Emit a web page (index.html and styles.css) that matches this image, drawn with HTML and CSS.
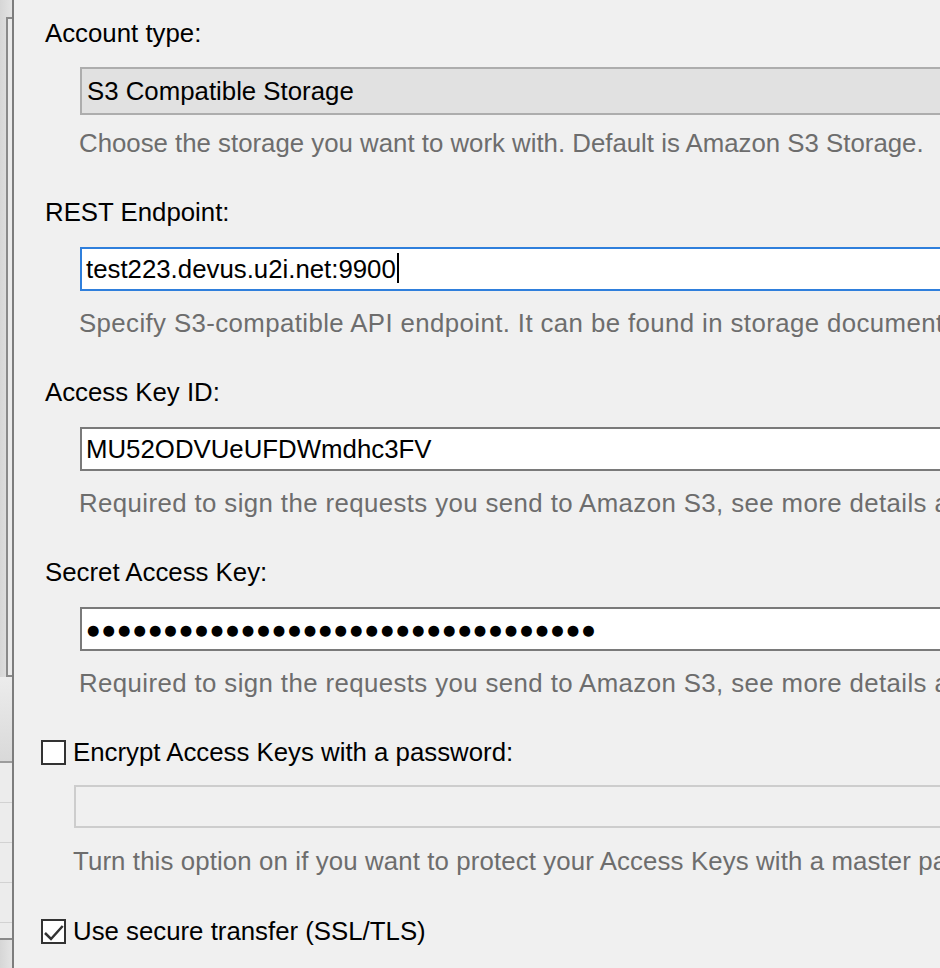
FILE: index.html
```html
<!DOCTYPE html>
<html lang="en">
<head>
<meta charset="utf-8">
<title>S3 Compatible Storage account</title>
<link rel="stylesheet" href="styles.css">
</head>
<body>
<div class="screen">
  <div class="backdrop">
    <div class="bd-panel"></div>
    <div class="bd-shade"></div>
    <div class="bd-row"></div>
    <div class="bd-row"></div>
    <div class="bd-row"></div>
    <div class="bd-row"></div>
    <div class="bd-last"></div>
  </div>
  <div class="edge"></div>
  <main class="dialog">
    <section class="group">
      <div class="label">Account type:</div>
      <div class="combo">S3 Compatible Storage</div>
      <div class="hint hint-first">Choose the storage you want to work with. Default is Amazon S3 Storage.</div>
    </section>
    <section class="group">
      <div class="label">REST Endpoint:</div>
      <div class="field focused">test223.devus.u2i.net:9900<span class="caret"></span></div>
      <div class="hint hint-wide">Specify S3-compatible API endpoint. It can be found in storage documentation.</div>
    </section>
    <section class="group">
      <div class="label">Access Key ID:</div>
      <div class="field">MU52ODVUeUFDWmdhc3FV</div>
      <div class="hint hint-wide">Required to sign the requests you send to Amazon S3, see more details at Amazon S3 documentation.</div>
    </section>
    <section class="group">
      <div class="label">Secret Access Key:</div>
      <div class="field"><span class="dots">●●●●●●●●●●●●●●●●●●●●●●●●●●●●●●●●●</span></div>
      <div class="hint hint-wide">Required to sign the requests you send to Amazon S3, see more details at Amazon S3 documentation.</div>
    </section>
    <div class="check-row first-check">
      <span class="box"></span>
      <span class="check-label">Encrypt Access Keys with a password:</span>
    </div>
    <div class="field disabled"></div>
    <div class="hint hint-enc">Turn this option on if you want to protect your Access Keys with a master password.</div>
    <div class="check-row second-check">
      <span class="box"><svg class="tick" viewBox="0 0 21 21" width="21" height="21"><polyline points="2,12 8,18 19.7,5" fill="none" stroke="#333" stroke-width="2.5"/></svg></span>
      <span class="check-label">Use secure transfer (SSL/TLS)</span>
    </div>
  </main>
</div>
</body>
</html>
```
FILE: styles.css
```css
html, body {
  margin: 0;
  padding: 0;
  height: 100%;
  overflow: hidden;
  background: #f0f0f0;
}
.screen {
  display: flex;
  width: 940px;
  height: 968px;
  overflow: hidden;
}
.backdrop {
  width: 12px;
  flex: none;
  display: flex;
  flex-direction: column;
  background: linear-gradient(to right, #d6d6d6, #e4e4e4);
}
.bd-panel {
  margin: 17px 0 0 6px;
  height: 656px;
  border: 2px solid #8a8a8a;
  border-right: 0;
  background: #ebebeb;
}
.bd-shade {
  height: 84px;
  border-bottom: 2px solid #9c9c9c;
  background: linear-gradient(#ececec, #d9d9d9);
}
.bd-row {
  height: 39px;
  border-bottom: 1px solid #d2d2d2;
  background: #ececec;
}
.bd-last {
  height: 15px;
  border-bottom: 2px solid #8a8a8a;
  background: #ececec;
}
.edge {
  width: 2px;
  flex: none;
  background: #7d7d7d;
}
.dialog {
  flex: 1;
  min-width: 0;
  padding: 15px 0 0 31px;
  font-family: "Liberation Sans", Arial, sans-serif;
  font-size: 25.8px;
  line-height: 36px;
  color: #000;
  white-space: nowrap;
  overflow: hidden;
}
.group {
  margin-bottom: 33px;
}
.label {
  height: 36px;
}
.combo {
  margin: 16px 0 0 35px;
  width: 1000px;
  height: 44px;
  line-height: 44px;
  padding-left: 5px;
  border: 2px solid #adadad;
  background: #e1e1e1;
}
.field {
  margin: 17px 0 0 35px;
  width: 1000px;
  height: 40px;
  line-height: 40px;
  padding-left: 4px;
  border: 2px solid #7a7a7a;
  background: #fff;
}
.field.focused {
  border-color: #2f7fdc;
}
.caret {
  display: inline-block;
  width: 2px;
  height: 30px;
  margin-left: 1px;
  vertical-align: -5px;
  background: #000;
}
.dots {
  font-family: "DejaVu Sans", sans-serif;
  font-size: 14.3px;
  letter-spacing: 3px;
  padding-left: 1px;
  vertical-align: 3px;
}
.hint {
  margin: 14px 0 0 34px;
  color: #6d6d6d;
}
.hint-wide {
  letter-spacing: 0.4px;
}
.hint-first {
  margin-top: 10px;
}
.check-row {
  display: flex;
  align-items: center;
  height: 36px;
  margin-left: -4px;
}
.first-check {
  margin-top: 2px;
}
.second-check {
  margin-top: 34px;
}
.box {
  width: 21px;
  height: 21px;
  flex: none;
  display: flex;
  border: 2px solid #333;
  background: #fff;
  margin-right: 7px;
}
.tick {
  display: block;
}
.field.disabled {
  margin: 15px 0 0 29px;
  height: 39px;
  border-color: #cdcdcd;
  background: #f0f0f0;
}
.hint-enc {
  margin: 15px 0 0 28px;
  letter-spacing: 0.12px;
}
```
